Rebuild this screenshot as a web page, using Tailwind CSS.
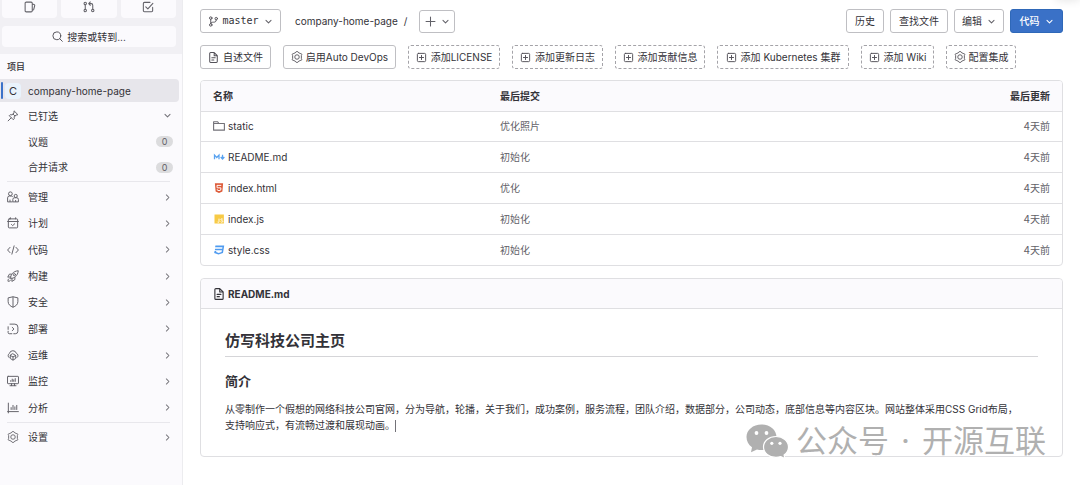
<!DOCTYPE html>
<html lang="zh-CN">
<head>
<meta charset="utf-8">
<title>company-home-page</title>
<meta name="viewport" content="width=device-width, initial-scale=1">
<script src="https://cdn.jsdelivr.net/npm/@tailwindcss/browser@4"></script>
</head>
<body class="flex min-h-screen overflow-hidden bg-white font-['Inter','Noto_Sans_CJK_SC',sans-serif] text-[10px] leading-4 text-[#333238]">

<svg class="hidden" aria-hidden="true">
  <defs>
    <symbol id="chev-r" viewBox="0 0 16 16"><path d="M6 3.5 10.5 8 6 12.5" fill="none" stroke="currentColor" stroke-width="1.8" stroke-linecap="round" stroke-linejoin="round"/></symbol>
    <symbol id="chev-d" viewBox="0 0 16 16"><path d="M3.5 6 8 10.5 12.5 6" fill="none" stroke="currentColor" stroke-width="1.8" stroke-linecap="round" stroke-linejoin="round"/></symbol>
    <symbol id="gear" viewBox="0 0 16 16"><g fill="none" stroke="currentColor" stroke-width="1.2" stroke-linejoin="round"><path d="M6.500 1.800 7 .8h2l.5 1 2.800 1.600 1.200-.1 1 1.800-.7 1v3.800l.7 1-1 1.800-1.200-.1-2.800 1.600-.5 1H7l-.5-1-2.800-1.600-1.200.1-1-1.800.7-1V6.100l-.7-1 1-1.800 1.200.1Z"/><circle cx="8" cy="8" r="3"/></g></symbol>
    <symbol id="plus-sq" viewBox="0 0 16 16"><path d="M3.500 2h9A1.500 1.500 0 0 1 14 3.500v9a1.500 1.500 0 0 1-1.500 1.500h-9A1.500 1.500 0 0 1 2 12.500v-9A1.500 1.500 0 0 1 3.500 2ZM8 5v6M5 8h6" fill="none" stroke="currentColor" stroke-width="1.400" stroke-linecap="round"/></symbol>
    <symbol id="doc" viewBox="0 0 16 16"><path d="M9 .8H3.800A1.300 1.300 0 0 0 2.500 2.100v11.800a1.300 1.300 0 0 0 1.300 1.300h8.400a1.300 1.300 0 0 0 1.300-1.300V5.300L9 .8v4.500h4.500M5.500 8.500h5M5.500 11.500h3" fill="none" stroke="currentColor" stroke-width="1.500" stroke-linecap="round" stroke-linejoin="round"/></symbol>
  </defs>
</svg>

<aside class="flex w-[183px] shrink-0 flex-col border-r border-[#ececef] bg-[#fbfafd]">
  <div class="bg-[#f1f0f4] px-[2px] pb-[7px] text-[#626168]">
    <div class="grid grid-cols-3 gap-1 pr-1">
      <button aria-label="议题" class="flex h-[18px] items-center justify-center rounded-b-sm bg-[#fbfafd] pb-1">
        <svg class="size-3" viewBox="0 0 16 16" fill="none" stroke="currentColor" stroke-width="1.400" stroke-linejoin="round"><path d="M3 1.500h6.500A1.500 1.500 0 0 1 11 3v10a1.500 1.500 0 0 1-1.500 1.500H3A1.500 1.500 0 0 1 1.500 13V3A1.500 1.500 0 0 1 3 1.500ZM11 4l2.500.8a1 1 0 0 1 .8 1.200L13 11.200a1 1 0 0 1-.9.700L11 12"/></svg>
      </button>
      <button aria-label="合并请求" class="flex h-[18px] items-center justify-center rounded-b-sm bg-[#fbfafd] pb-1">
        <svg class="size-3" viewBox="0 0 16 16" fill="none" stroke="currentColor" stroke-width="1.400" stroke-linecap="round" stroke-linejoin="round"><circle cx="3" cy="3.300" r="1.600"/><circle cx="3" cy="12.700" r="1.600"/><circle cx="13" cy="12.700" r="1.600"/><path d="M3 5v6M13 11V5.500a2 2 0 0 0-2-2H8M9.800 1.300l-2.200 2.200 2.200 2.200"/></svg>
      </button>
      <button aria-label="待办事项" class="flex h-[18px] items-center justify-center rounded-b-sm bg-[#fbfafd] pb-1">
        <svg class="size-3" viewBox="0 0 16 16" fill="none" stroke="currentColor" stroke-width="1.400" stroke-linecap="round" stroke-linejoin="round"><path d="M14.200 8.500v4.200a1.500 1.500 0 0 1-1.500 1.500H3.300a1.500 1.500 0 0 1-1.500-1.500V3.300a1.500 1.500 0 0 1 1.500-1.500h7.400M5 7.800l2.800 2.800 6.700-7.500"/></svg>
      </button>
    </div>
    <button class="mt-2 flex h-[21px] w-[174px] items-center justify-center gap-1 rounded-sm bg-[#fbfafd] text-[#333238]">
      <svg class="size-[11px] text-[#535158]" viewBox="0 0 16 16" fill="none" stroke="currentColor" stroke-width="1.400" stroke-linecap="round"><circle cx="7" cy="7" r="5.700"/><path d="m11.300 11.300 3.700 3.700"/></svg>
      搜索或转到...
    </button>
  </div>

  <nav class="flex flex-col text-[#333238]">
    <h2 class="flex h-[25px] items-center pl-[7px] text-[9px] font-medium">项目</h2>
    <a href="#" class="mr-[3px] flex h-[23px] items-center rounded-r-sm bg-[#e7e6eb]">
      <span class="ml-px h-[17px] w-[2px] rounded-sm bg-[#3b73c9]"></span>
      <span class="ml-[2px] flex size-4 items-center justify-center rounded-sm bg-[#e9f3fc] text-[11px]">C</span>
      <span class="ml-[7px]">company-home-page</span>
    </a>
    <a href="#" class="flex h-[27px] items-center pr-[10px] pl-[7px]">
      <svg class="size-3 text-[#626168]" viewBox="0 0 16 16" fill="none" stroke="currentColor" stroke-width="1.300" stroke-linecap="round" stroke-linejoin="round"><path d="m9.800 1.500 4.700 4.700-1.200.5-1.300-.1-2.500 2.500.2 2.600-1.300 1.300-5.400-5.400L4.300 6.300l2.600.2 2.500-2.500-.1-1.300ZM5.500 10.500l-4 4M8 5.400 10.600 8"/></svg>
      <span class="ml-[9px] grow">已钉选</span>
      <svg class="size-[9px] text-[#737278]"><use href="#chev-d"/></svg>
    </a>
    <a href="#" class="flex h-[25px] items-center justify-between pr-[9px] pl-7">议题<span class="h-[11px] w-[17px] rounded-full bg-[#dcdcde] text-center text-[9px] leading-[11px] text-[#626168]">0</span></a>
    <a href="#" class="flex h-[26px] items-center justify-between pr-[9px] pl-7">合并请求<span class="h-[11px] w-[17px] rounded-full bg-[#dcdcde] text-center text-[9px] leading-[11px] text-[#626168]">0</span></a>
    <hr class="mt-px mr-3 ml-[7px] border-[#e8e7ec]">

    <ul class="mt-[2px] grid h-[237px] auto-rows-fr">
      <li><a href="#" class="flex h-full items-center pr-[10px] pl-[7px]">
        <svg class="size-3 text-[#626168]" viewBox="0 0 16 16" fill="none" stroke="currentColor" stroke-width="1.300" stroke-linejoin="round"><circle cx="4.500" cy="3.700" r="2.500"/><path d="M7.500 14.500H.8V9.200a2.500 2.500 0 0 1 2.500-2.500h2.400a2.500 2.500 0 0 1 2 1"/><circle cx="11.600" cy="6.600" r="2.100"/><path d="M7.800 14.500v-3.300a2.200 2.200 0 0 1 2.200-2.200h3a2.200 2.200 0 0 1 2.200 2.200v3.300ZM11.500 12v2.500M4 11.500v3"/></svg>
        <span class="ml-[9px] grow">管理</span><svg class="size-[9px] text-[#737278]"><use href="#chev-r"/></svg></a></li>
      <li><a href="#" class="flex h-full items-center pr-[10px] pl-[7px]">
        <svg class="size-3 text-[#626168]" viewBox="0 0 16 16" fill="none" stroke="currentColor" stroke-width="1.300" stroke-linecap="round" stroke-linejoin="round"><path d="M3 2.500h10a1.200 1.200 0 0 1 1.200 1.200v9.600a1.200 1.200 0 0 1-1.200 1.200H3a1.200 1.200 0 0 1-1.200-1.200V3.700A1.200 1.200 0 0 1 3 2.500ZM.8 6h14.400M4.500 1v1.500M11.500 1v1.500M6 10l1.500 1.500 2.800-2.500"/></svg>
        <span class="ml-[9px] grow">计划</span><svg class="size-[9px] text-[#737278]"><use href="#chev-r"/></svg></a></li>
      <li><a href="#" class="flex h-full items-center pr-[10px] pl-[7px]">
        <svg class="size-3 text-[#626168]" viewBox="0 0 16 16" fill="none" stroke="currentColor" stroke-width="1.300" stroke-linecap="round" stroke-linejoin="round"><path d="M4 4.500.8 8 4 11.500M12 4.500 15.200 8 12 11.500M9.500 2.500l-3 11"/></svg>
        <span class="ml-[9px] grow">代码</span><svg class="size-[9px] text-[#737278]"><use href="#chev-r"/></svg></a></li>
      <li><a href="#" class="flex h-full items-center pr-[10px] pl-[7px]">
        <svg class="size-3 text-[#626168]" viewBox="0 0 16 16" fill="none" stroke="currentColor" stroke-width="1.300" stroke-linecap="round" stroke-linejoin="round"><path d="M5 11C4 7 8 1.500 15 1 14.500 8 9 12 5 11ZM5.800 5.500H3.200L1 9.500l3.800-.2M10.500 10.200v2.600l-4 2.400.2-3.900M2.800 11.500c-1.300.5-1.600 2-1.500 3.500 1.500.1 3-.2 3.500-1.500"/><circle cx="9.800" cy="6.200" r="1.500"/></svg>
        <span class="ml-[9px] grow">构建</span><svg class="size-[9px] text-[#737278]"><use href="#chev-r"/></svg></a></li>
      <li><a href="#" class="flex h-full items-center pr-[10px] pl-[7px]">
        <svg class="size-3 text-[#626168]" viewBox="0 0 16 16" fill="none" stroke="currentColor" stroke-width="1.300" stroke-linejoin="round"><path d="M8 1 14.500 2.500V7.500C14.500 11.500 11.500 13.500 8 15 4.500 13.500 1.500 11.500 1.500 7.500V2.500ZM8 1v14"/></svg>
        <span class="ml-[9px] grow">安全</span><svg class="size-[9px] text-[#737278]"><use href="#chev-r"/></svg></a></li>
      <li><a href="#" class="flex h-full items-center pr-[10px] pl-[7px]">
        <svg class="size-3 text-[#626168]" viewBox="0 0 16 16" fill="none" stroke="currentColor" stroke-width="1.300" stroke-linecap="round" stroke-linejoin="round"><path d="M4 1.500h6.500a4 4 0 0 1 4 4V11a3.300 3.300 0 0 1-3.300 3.300H9M1.500 5v3.500M1.500 11v1.800a1.500 1.500 0 0 0 1.500 1.500h3.500M7 5.800 9.300 8 7 10.200"/></svg>
        <span class="ml-[9px] grow">部署</span><svg class="size-[9px] text-[#737278]"><use href="#chev-r"/></svg></a></li>
      <li><a href="#" class="flex h-full items-center pr-[10px] pl-[7px]">
        <svg class="size-3 text-[#626168]" viewBox="0 0 16 16" fill="none" stroke="currentColor" stroke-width="1.300" stroke-linecap="round" stroke-linejoin="round"><path d="M2.800 11.500A3.200 3.200 0 0 1 3.200 6a4.800 4.800 0 0 1 9.300-.2 3.200 3.200 0 0 1 .7 5.700M8 6.500l3.600 2v4.200L8 14.800l-3.600-2.100V8.500ZM4.600 8.700 8 10.600l3.400-1.900M8 10.600v4"/></svg>
        <span class="ml-[9px] grow">运维</span><svg class="size-[9px] text-[#737278]"><use href="#chev-r"/></svg></a></li>
      <li><a href="#" class="flex h-full items-center pr-[10px] pl-[7px]">
        <svg class="size-3 text-[#626168]" viewBox="0 0 16 16" fill="none" stroke="currentColor" stroke-width="1.300" stroke-linecap="round" stroke-linejoin="round"><path d="M1.500 1.800h13a.8.8 0 0 1 .8.800v8.200a.8.800 0 0 1-.8.800h-13a.8.800 0 0 1-.8-.8V2.600a.8.800 0 0 1 .8-.8ZM6 11.600v2.600M10 11.600v2.600M4 14.300h8M5 7.500v1M7 5.500v3M9 6.500v2M11 4.800v3.700"/></svg>
        <span class="ml-[9px] grow">监控</span><svg class="size-[9px] text-[#737278]"><use href="#chev-r"/></svg></a></li>
      <li><a href="#" class="flex h-full items-center pr-[10px] pl-[7px]">
        <svg class="size-3 text-[#626168]" viewBox="0 0 16 16" fill="none" stroke="currentColor" stroke-width="1.300" stroke-linecap="round"><path d="M1.800 1.500v13M.8 12.800h14.400M5.500 7.500v2.500M8 4.500V10M10.500 6.500V10M13 4.500V10"/></svg>
        <span class="ml-[9px] grow">分析</span><svg class="size-[9px] text-[#737278]"><use href="#chev-r"/></svg></a></li>
    </ul>
    <hr class="mt-px mr-3 ml-[7px] border-[#e8e7ec]">
    <a href="#" class="mt-px flex h-[26px] items-center pr-[10px] pl-[7px]">
      <svg class="size-3 text-[#626168]"><use href="#gear"/></svg>
      <span class="ml-[9px] grow">设置</span><svg class="size-[9px] text-[#737278]"><use href="#chev-r"/></svg>
    </a>
  </nav>
</aside>

<main class="relative min-w-0 grow pt-[9px] pr-[17px] pl-[17px]">
  <div class="absolute -top-2 right-0 h-2 w-6 shadow-[0_0_10px_rgba(0,0,0,0.12)]"></div>

  <div class="flex items-start">
    <button class="flex h-6 w-[81px] items-center justify-center rounded-[3px] border border-[#bfbfc3] font-['DejaVu_Sans_Mono',monospace]">
      <svg class="size-[11px] text-[#535158]" viewBox="0 0 16 16" fill="none" stroke="currentColor" stroke-width="1.400" stroke-linecap="round"><circle cx="4" cy="3" r="1.800"/><circle cx="4" cy="13" r="1.800"/><circle cx="12" cy="3.800" r="1.800"/><path d="M4 5v6M12 5.700c0 3-2 3.300-4 3.300s-4 .3-4 2"/></svg>
      <span class="mr-[5px] ml-[3px]">master</span>
      <svg class="size-[9px] text-[#626168]"><use href="#chev-d"/></svg>
    </button>
    <div class="ml-[14px] flex h-6 w-[124px] items-center gap-[6px]"><a href="#">company-home-page</a><span>/</span></div>
    <button aria-label="添加到仓库" class="mt-px flex h-[23px] w-9 items-center justify-center gap-[5px] rounded-[3px] border border-[#bfbfc3] text-[#626168]">
      <svg class="size-[11px]" viewBox="0 0 16 16" fill="none" stroke="currentColor" stroke-width="1.500" stroke-linecap="round"><path d="M8 1.500v13M1.500 8h13"/></svg>
      <svg class="size-[9px]"><use href="#chev-d"/></svg>
    </button>
    <div class="ml-auto flex gap-[6px]">
      <button class="h-6 w-[38px] rounded-[3px] border border-[#bfbfc3]">历史</button>
      <button class="h-6 w-[58px] rounded-[3px] border border-[#bfbfc3]">查找文件</button>
      <button class="flex h-6 w-[50px] items-center justify-center gap-[5px] rounded-[3px] border border-[#bfbfc3]">编辑<svg class="size-[9px] text-[#626168]"><use href="#chev-d"/></svg></button>
      <button class="flex h-6 w-[53px] items-center justify-center gap-[5px] rounded-[3px] border border-[#2f68b8] bg-[#3a71c7] font-medium text-white">代码<svg class="size-[9px]"><use href="#chev-d"/></svg></button>
    </div>
  </div>

  <div class="mt-3 flex gap-3 whitespace-nowrap">
    <button class="flex h-6 w-[71px] items-center justify-center gap-1 rounded-[3px] border border-[#bfbfc3]"><svg class="size-[11px] text-[#535158]"><use href="#doc"/></svg>自述文件</button>
    <button class="flex h-6 w-[113px] items-center justify-center gap-[3px] rounded-[3px] border border-[#bfbfc3]"><svg class="size-3 text-[#535158]"><use href="#gear"/></svg>启用Auto DevOps</button>
    <button class="flex h-6 w-[92px] items-center justify-center gap-1 rounded-[3px] border border-dashed border-[#a4a3a8]"><svg class="size-[11px] text-[#535158]"><use href="#plus-sq"/></svg>添加LICENSE</button>
    <button class="flex h-6 w-[91px] items-center justify-center gap-1 rounded-[3px] border border-dashed border-[#a4a3a8]"><svg class="size-[11px] text-[#535158]"><use href="#plus-sq"/></svg>添加更新日志</button>
    <button class="flex h-6 w-[90px] items-center justify-center gap-1 rounded-[3px] border border-dashed border-[#a4a3a8]"><svg class="size-[11px] text-[#535158]"><use href="#plus-sq"/></svg>添加贡献信息</button>
    <button class="flex h-6 w-[132px] items-center justify-center gap-1 rounded-[3px] border border-dashed border-[#a4a3a8]"><svg class="size-[11px] text-[#535158]"><use href="#plus-sq"/></svg>添加 Kubernetes 集群</button>
    <button class="flex h-6 w-[73px] items-center justify-center gap-1 rounded-[3px] border border-dashed border-[#a4a3a8]"><svg class="size-[11px] text-[#535158]"><use href="#plus-sq"/></svg>添加 Wiki</button>
    <button class="flex h-6 w-[70px] items-center justify-center gap-[3px] rounded-[3px] border border-dashed border-[#a4a3a8]"><svg class="size-3 text-[#535158]"><use href="#gear"/></svg>配置集成</button>
  </div>

  <div class="mt-[11px] overflow-hidden rounded border border-[#dfdfe2]">
    <table class="w-full table-fixed border-collapse text-left">
      <thead>
        <tr class="h-[30px] border-b border-[#dfdfe2] bg-[#fbfafd]">
          <th class="w-1/3 pl-3 font-bold">名称</th>
          <th class="pl-3 font-bold">最后提交</th>
          <th class="w-1/5 pr-3 text-right font-bold">最后更新</th>
        </tr>
      </thead>
      <tbody class="text-[#626168]">
        <tr class="h-[30px] border-b border-[#dfdfe2]">
          <td class="pl-3"><a href="#" class="flex items-center gap-[3px] text-[#333238]"><svg class="size-3 text-[#737278]" viewBox="0 0 16 16" fill="none" stroke="currentColor" stroke-width="1.500" stroke-linejoin="round"><path d="M.8 13.500V2.300h5.400l1.600 2.400h7.400v8.800ZM.8 4.700h7"/></svg>static</a></td>
          <td class="pl-3">优化照片</td><td class="pr-3 text-right">4天前</td>
        </tr>
        <tr class="h-[31px] border-b border-[#dfdfe2]">
          <td class="pl-3"><a href="#" class="flex items-center gap-[3px] text-[#333238]"><svg class="size-3" viewBox="0 0 16 16" fill="none" stroke="#5aa3f0" stroke-width="1.700"><path d="M2 11V5.500L5 8.700l3-3.200V11M12.700 5v5M10.300 8l2.400 2.700L15.100 8"/></svg>README.md</a></td>
          <td class="pl-3">初始化</td><td class="pr-3 text-right">4天前</td>
        </tr>
        <tr class="h-[31px] border-b border-[#dfdfe2]">
          <td class="pl-3"><a href="#" class="flex items-center gap-[3px] text-[#333238]"><svg class="size-3" viewBox="0 0 16 16"><path d="M2.500 1.500h11l-1 11.300L8 14.500l-4.500-1.700Z" fill="#dd5a38"/><path d="M11 4.500H5.300l.3 3.300h5l-.3 3L8 11.600l-2.300-.8-.1-1" fill="none" stroke="#fff" stroke-width="1.300"/></svg>index.html</a></td>
          <td class="pl-3">优化</td><td class="pr-3 text-right">4天前</td>
        </tr>
        <tr class="h-[31px] border-b border-[#dfdfe2]">
          <td class="pl-3"><a href="#" class="flex items-center gap-[3px] text-[#333238]"><svg class="size-3" viewBox="0 0 16 16"><path d="M2 2h12.500v12H2Z" fill="#f7ca45"/><path d="M8 7.500v4c0 1.200-1.700 1.300-2.200.2M13 8.300c-1-.9-2.500-.6-2.500.4 0 1.400 2.600.9 2.600 2.500 0 1.300-2 1.400-2.900.3" fill="none" stroke="#fff" stroke-width="1.200"/></svg>index.js</a></td>
          <td class="pl-3">初始化</td><td class="pr-3 text-right">4天前</td>
        </tr>
        <tr class="h-[31px]">
          <td class="pl-3"><a href="#" class="flex items-center gap-[3px] text-[#333238]"><svg class="size-3" viewBox="0 0 16 16" fill="#4f9bf0"><path d="M3.200 2h11.800L13.300 12 7.300 14 1.500 12l.6-2.700h2.300L4.200 10.700l3.400 1.200 3.800-1.200.5-2.400H2.400l.4-2.100h9.500l.3-2H2.800Z"/></svg>style.css</a></td>
          <td class="pl-3">初始化</td><td class="pr-3 text-right">4天前</td>
        </tr>
      </tbody>
    </table>
  </div>

  <article class="mt-3 rounded border border-[#dfdfe2]">
    <header class="flex h-[30px] items-center gap-[3px] rounded-t border-b border-[#dfdfe2] bg-[#fbfafd] pl-3 font-bold">
      <svg class="size-3"><use href="#doc"/></svg><a href="#">README.md</a>
    </header>
    <div class="px-6 pt-5 pb-[23px]">
      <h1 class="border-b border-[#d5d5d8] pb-[3px] text-[15px] leading-6 font-bold">仿写科技公司主页</h1>
      <h2 class="mt-[14px] text-[13px] leading-5 font-bold">简介</h2>
      <p class="mt-[10px] leading-4">从零制作一个假想的网络科技公司官网，分为导航，轮播，关于我们，成功案例，服务流程，团队介绍，数据部分，公司动态，底部信息等内容区块。网站整体采用CSS Grid布局，<br>支持响应式，有流畅过渡和展现动画。<span class="inline-block h-3 w-px bg-[#737278] align-middle"></span></p>
    </div>
  </article>

  <div class="absolute top-[420px] right-[34px] flex items-center gap-[7px] whitespace-nowrap text-[#b0b0b0]">
    <svg class="h-[35px] w-[43px]" viewBox="0 0 43 35"><path d="M15.500.5C24 .5 30.500 6 30.500 13S24 26 15.500 26c-1.600 0-3.100-.2-4.500-.6L5 28.200l1-5C2.500 20.800.5 17.200.5 13 .5 6 7 .5 15.500.5Z" fill="currentColor"/><path d="M30 12.500c7 0 12.500 4.600 12.500 10.500 0 3.300-1.700 6.200-4.400 8.100l.8 3.400-4.100-1.900c-1.500.5-3.100.8-4.800.8-7 0-12.500-4.600-12.500-10.400S23 12.500 30 12.500Z" fill="currentColor" stroke="#fff" stroke-width="1.200"/><g fill="#fff"><circle cx="10.500" cy="9" r="1.900"/><circle cx="20.500" cy="9" r="1.900"/><circle cx="25.800" cy="19.300" r="1.600"/><circle cx="34" cy="19.300" r="1.600"/></g></svg>
    <p class="flex gap-3 text-[31px] leading-[42px]"><span>公众号</span><span>·</span><span>开源互联</span></p>
  </div>
</main>
</body>
</html>
